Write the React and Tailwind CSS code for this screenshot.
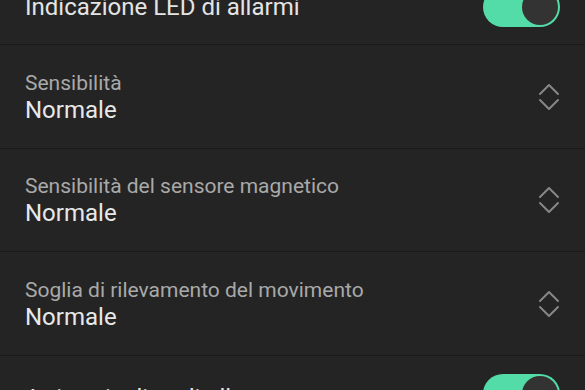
import React from "react";

function Toggle() {
  return (
    <div className="w-[77px] h-10 rounded-full bg-[#53dba8] p-[2px] flex justify-end shrink-0">
      <div className="w-9 h-9 rounded-full bg-[#333333]" />
    </div>
  );
}

function Chevrons() {
  return (
    <svg width="22" height="28" viewBox="0 0 22 28" fill="none" stroke="#878787" strokeWidth="2" strokeLinecap="round" strokeLinejoin="round" className="shrink-0">
      <path d="M2 11 L11 2 L20 11" />
      <path d="M2 17 L11 26 L20 17" />
    </svg>
  );
}

const selects = [
  { label: "Sensibilità", value: "Normale", h: "h-[104px]" },
  { label: "Sensibilità del sensore magnetico", value: "Normale", h: "h-[103px]" },
  { label: "Soglia di rilevamento del movimento", value: "Normale", h: "h-[104px]" },
];

export default function App() {
  return (
    <div className="w-[585px] h-[390px] overflow-hidden bg-[#242424] font-['Roboto',sans-serif]">
      {/* LED toggle row */}
      <div className="h-[76px] mt-[-31px] flex items-center justify-between pl-[25px] pr-[25px] border-b border-[#1a1a1a]">
        <span className="text-[24px] text-[#e4e4e4]">Indicazione LED di allarmi</span>
        <Toggle />
      </div>

      {/* Select rows */}
      {selects.map((s) => (
        <div key={s.label} className={`${s.h} flex items-center justify-between pl-[25px] pr-[25px] border-b border-[#1a1a1a]`}>
          <div className="flex flex-col">
            <span className="text-[21px] leading-[26px] text-[#a9a9a9]">{s.label}</span>
            <span className="text-[24px] leading-[28px] text-[#e8e8e8]">{s.value}</span>
          </div>
          <Chevrons />
        </div>
      ))}

      {/* Buzzer toggle row */}
      <div className="h-[76px] flex items-center justify-between pl-[25px] pr-[25px]">
        <span className="mt-[8px] text-[24px] text-[#e4e4e4]">Attiva cicalino di allarme</span>
        <Toggle />
      </div>
    </div>
  );
}
